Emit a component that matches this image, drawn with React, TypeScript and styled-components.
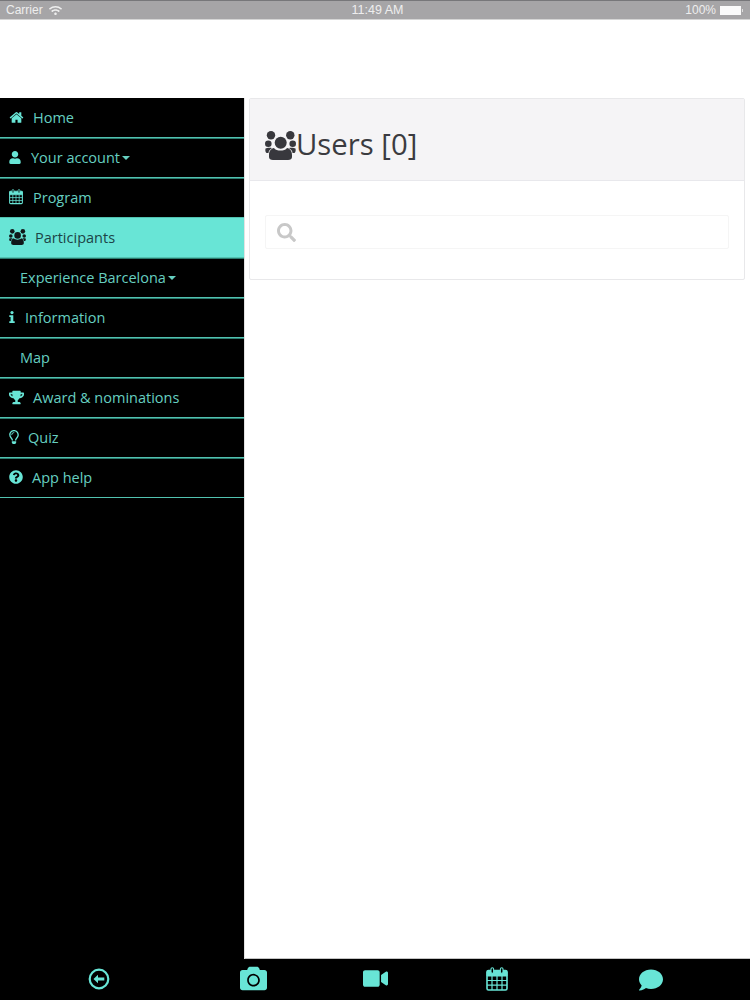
import React from "react";
import styled, { createGlobalStyle } from "styled-components";
import {
  FaUser, FaTrophy, FaRegLightbulb, FaQuestionCircle,
  FaSearch, FaCamera, FaVideo, FaComment, FaWifi,
} from "react-icons/fa";

const TEAL = "#68e5d6";

const Global = createGlobalStyle`
  html, body { margin: 0; padding: 0; background: #fff; }
  body { font-family: "Open Sans", "Liberation Sans", sans-serif; }
`;
const Page = styled.div`
  width: 750px; height: 1000px; display: flex; flex-direction: column; overflow: hidden;
`;
const StatusBar = styled.div`
  height: 18px; flex: none; background: #a6a5a7; border-top: 1px solid #77777a; border-bottom: 1px solid #d5d5d5;
  display: grid; grid-template-columns: 1fr auto 1fr; align-items: center; padding: 0 6px;
  color: #eeeeee; font-family: "Liberation Sans", sans-serif; font-size: 12px;
`;
const StatusLeft = styled.div` display: flex; align-items: center; gap: 6px; `;
const StatusTime = styled.span` margin-left: 5px; font-size: 12.500px; `;
const StatusRight = styled.div` display: flex; align-items: center; justify-content: flex-end; gap: 4px; `;
const Battery = styled.span`
  width: 21px; height: 9px; background: #fafafa; margin-right: 3px; position: relative;
  &::after { content: ""; position: absolute; right: -2px; top: 3px; width: 1px; height: 3px; background: #dddddd; }
`;
const Spacer = styled.div` height: 78px; flex: none; `;
const Main = styled.div` flex: 1; display: flex; min-height: 0; `;
const Sidebar = styled.nav` width: 244px; flex: none; background: #000; border-right: 1px solid #e2e2e2; `;
const Row = styled.div<{ $active?: boolean; $indent?: boolean }>`
  height: 36px; padding: 0 0 2px ${p => (p.$indent ? 20 : 9)}px; display: flex; align-items: center;
  border-bottom: 1px solid #52c2b0;
  border-top: 1px solid ${p => (p.$active ? TEAL : "#2a7a6e")};
  background: ${p => (p.$active ? TEAL : "#000")};
  color: ${p => (p.$active ? "#1c4446" : "#66cfc0")};
  font-size: 14.5px;
  &:first-child { border-top-color: #000; }
`;
const RowIcon = styled.span<{ $gap: number; $box: number; $dark?: boolean }>`
  display: inline-flex; width: ${p => p.$box}px; margin-right: ${p => p.$gap}px; justify-content: center;
  color: ${p => (p.$dark ? "#10181a" : TEAL)};
`;
const Caret = styled.span`
  width: 0; height: 0; margin-left: 2px; margin-top: 2px;
  border-left: 4px solid transparent; border-right: 4px solid transparent; border-top: 4px solid currentColor;
`;
const Content = styled.main` flex: 1; padding: 0 5px 0 4px; border-bottom: 1px solid #c4c4c4; `;
const Panel = styled.section`
  border: 1px solid #e8e8ea; border-radius: 2px; height: 182px; box-sizing: border-box; background: #fff;
`;
const PanelHead = styled.header`
  height: 82px; background: #f5f4f6; border-bottom: 1px solid #e8e8ec; display: flex; align-items: center;
  padding: 11px 15px 0; box-sizing: border-box; color: #3b3b40;
`;
const Title = styled.h1` margin: 0; font-size: 29.3px; font-weight: 400; line-height: 1; `;
const PanelBody = styled.div` padding: 34px 15px 0; `;
const Search = styled.div`
  height: 34px; box-sizing: border-box; border: 1px solid #f5f5f5; border-radius: 2px; display: flex; align-items: center;
  padding-left: 11px; color: #c8c8c8; font-size: 19px;
`;
const Footer = styled.footer`
  height: 41px; flex: none; background: #000; color: ${TEAL};
  display: grid; grid-template-columns: 198px 110px 134px 110px 198px; align-items: center;
`;
const Tab = styled.div<{ $drop?: number }>`
  display: flex; justify-content: center; align-items: center; margin-top: ${p => p.$drop ?? -2}px;
`;

const UsersIcon = ({ width, color }: { width: number; color: string }) => (
  <svg width={width} height={(width * 29) / 31} viewBox="0 0 31 29" fill={color} aria-hidden="true">
    <circle cx="15.700" cy="11.700" r="6" />
    <circle cx="6" cy="4.300" r="4.200" /><circle cx="25.300" cy="4.300" r="4.200" />
    <circle cx="3.300" cy="12.700" r="3.300" /><circle cx="27.700" cy="12.700" r="3.300" />
    <path d="M9 17c1 2 4 2.500 6.500 2.500S21 19 22 17c3 .5 5 3 5 7v2c0 2-1.500 3-4 3H8c-2.500 0-4-1-4-3v-2c0-4 2-6.500 5-7z" />
    <path d="M.5 17.500c1.500-1 4.500-1 6.500-.5-2 1.500-3.500 3-3.500 5H1.500C.5 21.500 0 19.500.5 17.500zM30.500 17.500c-1.500-1-4.500-1-6.500-.5 2 1.500 3.500 3 3.500 5h2c1-.5 1.500-2.500 1-4.500z" />
  </svg>
);
const HomeIcon = () => (
  <svg width="15" height="15" viewBox="0 0 1792 1792" fill="currentColor" aria-hidden="true">
    <path d="M1472 992v480q0 26-19 45t-45 19h-384v-384H768v384H384q-26 0-45-19t-19-45V992q0-1 .5-3t.5-3l575-474 575 474q1 2 1 6zm223-69l-62 74q-8 9-21 11h-3q-13 0-21-7L896 424l-692 577q-12 8-24 7-13-2-21-11l-62-74q-8-10-7-23.500t11-21.500l719-599q32-26 76-26t76 26l244 204V288q0-14 9-23t23-9h192q14 0 23 9t9 23v408l219 182q10 8 11 21.500t-7 23.500z" />
  </svg>
);
const InfoIcon = () => (
  <svg width="6" height="12" viewBox="0 0 6 12" fill="currentColor" aria-hidden="true">
    <circle cx="3" cy="1.600" r="1.600" />
    <path d="M.3 4.300h4v6h1.400V12H.3v-1.700h1.300V6H.3z" />
  </svg>
);
const CalendarIcon = ({ width }: { width: number }) => (
  <svg width={width} height={(width * 24) / 22} viewBox="0 0 22 24" fill="none" stroke="currentColor" aria-hidden="true">
    <rect x="1" y="3.500" width="20" height="19.500" rx="1.500" strokeWidth="1.600" />
    <path d="M1 4.500h20V9H1z" fill="currentColor" strokeWidth="1" />
    <path d="M1 13.500h20M1 18.200h20M6 9v14M11 9v14M16 9v14" strokeWidth="1.200" />
    <rect x="5" y=".8" width="2.600" height="5.600" rx="1.300" fill="#000" strokeWidth="1.100" />
    <rect x="14.400" y=".8" width="2.600" height="5.600" rx="1.300" fill="#000" strokeWidth="1.100" />
  </svg>
);
const BackIcon = () => (
  <svg width="22" height="22" viewBox="0 0 22 22" aria-hidden="true">
    <circle cx="11" cy="11" r="9.300" fill="none" stroke={TEAL} strokeWidth="2.200" />
    <path d="M5.500 11l4.500-4.200v2.700h6.300v3H10v2.700z" fill={TEAL} />
  </svg>
);

type Item = { label: string; icon?: React.ReactNode; box?: number; gap?: number; caret?: boolean; active?: boolean; indent?: boolean };
const items: Item[] = [
  { label: "Home", icon: <HomeIcon />, box: 15, gap: 9 },
  { label: "Your account", icon: <FaUser size={13} />, box: 12, gap: 10, caret: true },
  { label: "Program", icon: <CalendarIcon width={14} />, box: 14, gap: 10 },
  { label: "Participants", icon: <UsersIcon width={17} color="#10181a" />, box: 17, gap: 9, active: true },
  { label: "Experience Barcelona", indent: true, caret: true },
  { label: "Information", icon: <InfoIcon />, box: 6, gap: 10 },
  { label: "Map", indent: true },
  { label: "Award & nominations", icon: <FaTrophy size={15} />, box: 15, gap: 9 },
  { label: "Quiz", icon: <FaRegLightbulb size={14} />, box: 10, gap: 9 },
  { label: "App help", icon: <FaQuestionCircle size={14} />, box: 14, gap: 9 },
];

export default function App() {
  return (
    <Page>
      <Global />
      <StatusBar>
        <StatusLeft>Carrier <FaWifi size={13} /></StatusLeft>
        <StatusTime>11:49 AM</StatusTime>
        <StatusRight>100% <Battery /></StatusRight>
      </StatusBar>
      <Spacer />
      <Main>
        <Sidebar>
          {items.map(it => (
            <Row key={it.label} $active={it.active} $indent={it.indent}>
              {it.icon && <RowIcon $box={it.box!} $gap={it.gap!} $dark={it.active}>{it.icon}</RowIcon>}
              {it.label}
              {it.caret && <Caret />}
            </Row>
          ))}
        </Sidebar>
        <Content>
          <Panel>
            <PanelHead>
              <UsersIcon width={31} color="#38383d" />
              <Title>Users [0]</Title>
            </PanelHead>
            <PanelBody>
              <Search><FaSearch /></Search>
            </PanelBody>
          </Panel>
        </Content>
      </Main>
      <Footer>
        <Tab><BackIcon /></Tab>
        <Tab><FaCamera size={27} /></Tab>
        <Tab><FaVideo size={25} /></Tab>
        <Tab><CalendarIcon width={22} /></Tab>
        <Tab $drop={1}><FaComment size={24} /></Tab>
      </Footer>
    </Page>
  );
}
